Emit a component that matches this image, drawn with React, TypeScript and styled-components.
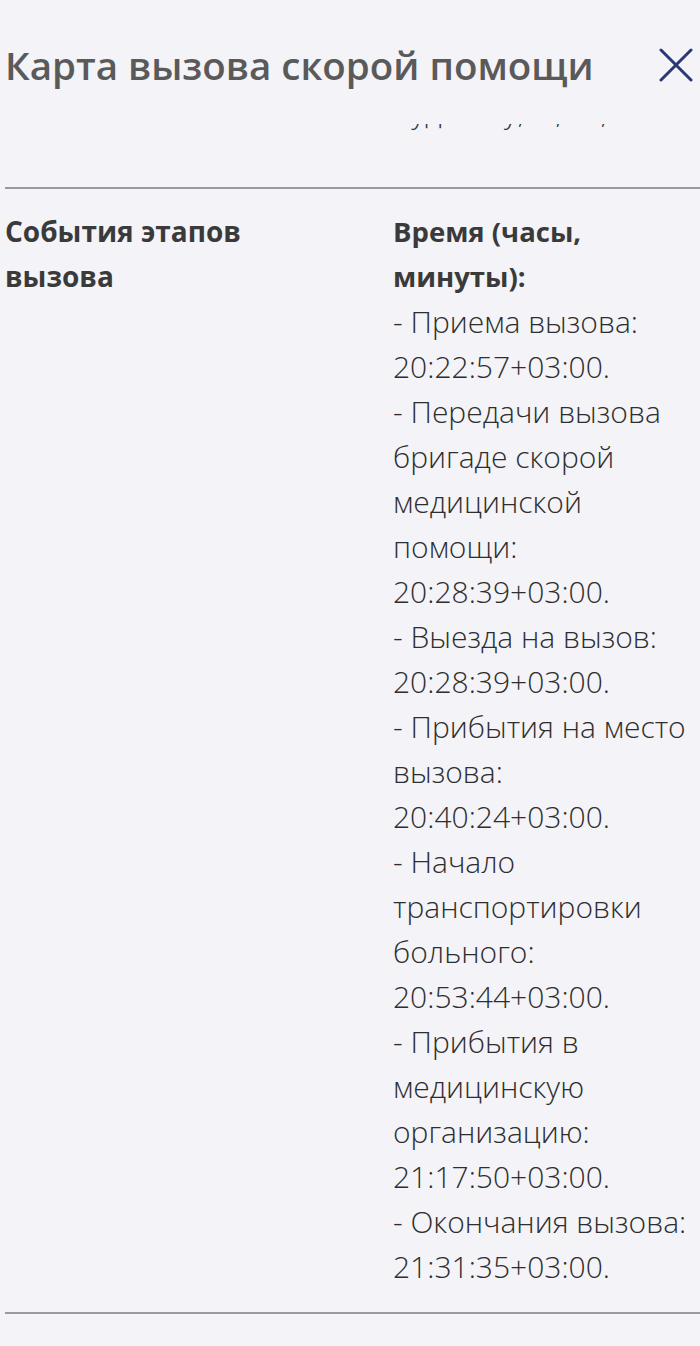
import React from "react";
import styled, { createGlobalStyle } from "styled-components";

const GlobalStyle = createGlobalStyle`
  html, body { margin: 0; padding: 0; background: #f3f3f8; }
  body { font-family: "Open Sans", "Noto Sans", sans-serif; color: #333; }
`;

const Page = styled.div`
  width: 700px;
  min-height: 1346px;
  background: #f3f3f8;
  overflow: hidden;
`;

const Header = styled.header`
  height: 120px;
  display: flex;
  align-items: center;
  justify-content: space-between;
  padding: 9px 7px 0 5px;
  box-sizing: border-box;
`;

const Title = styled.h1`
  margin: 0;
  font-size: 38.5px;
  font-weight: 600;
  color: #5a5a5a;
  white-space: nowrap;
`;

const CloseButton = styled.button`
  border: 0;
  background: none;
  padding: 0;
  width: 34px;
  height: 34px;
  display: flex;
  align-items: center;
  justify-content: center;
  cursor: pointer;
`;

const Tail = styled.div`
  height: 9px;
  margin-top: 4px;
  overflow: hidden;
  padding-left: 396px;
`;

const TailText = styled.div`
  margin-top: -35px;
  font-size: 30px;
  line-height: 45px;
  font-weight: 300;
  white-space: pre;
  color: #333;
`;

const List = styled.div`
  margin-top: 54px;
  padding-left: 5px;
`;

const Row = styled.section`
  display: grid;
  grid-template-columns: 388px 1fr;
  border-top: 2px solid #9a9a9a;
  border-bottom: 2px solid #9a9a9a;
  padding: 20px 0 23px;
`;

const Label = styled.div`
  font-size: 28px;
  line-height: 45px;
  font-weight: 700;
  color: #3a3a3a;
`;

const Value = styled.div`
  font-size: 30px;
  line-height: 45px;
  font-weight: 300;
  color: #2e2e2e;
`;

const ValueHead = styled.div`
  font-weight: 700;
  font-size: 27.5px;
  color: #3a3a3a;
`;

const Line = styled.div`
  white-space: nowrap;
`;

const events: { name: string[]; time: string }[] = [
  { name: ["- Приема вызова:"], time: "20:22:57+03:00." },
  {
    name: ["- Передачи вызова", "бригаде скорой", "медицинской", "помощи:"],
    time: "20:28:39+03:00.",
  },
  { name: ["- Выезда на вызов:"], time: "20:28:39+03:00." },
  { name: ["- Прибытия на место", "вызова:"], time: "20:40:24+03:00." },
  { name: ["- Начало", "транспортировки", "больного:"], time: "20:53:44+03:00." },
  {
    name: ["- Прибытия в", "медицинскую", "организацию:"],
    time: "21:17:50+03:00.",
  },
  { name: ["- Окончания вызова:"], time: "21:31:35+03:00." },
];

export default function App() {
  return (
    <Page>
      <GlobalStyle />
      <Header>
        <Title>Карта вызова скорой помощи</Title>
        <CloseButton aria-label="Закрыть">
          <svg width="34" height="34" viewBox="0 0 34 34" fill="none">
            <path
              d="M2 2 L32 32 M32 2 L2 32"
              stroke="#2b3775"
              strokeWidth="3"
              strokeLinecap="round"
            />
          </svg>
        </CloseButton>
      </Header>
      <Tail aria-hidden="true">
        <TailText>{"  уд        у,    ,     ,"}</TailText>
      </Tail>
      <List>
        <Row>
          <Label>
            События этапов
            <br />
            вызова
          </Label>
          <Value>
            <ValueHead>
              Время (часы,
              <br />
              минуты):
            </ValueHead>
            {events.map((e) => (
              <React.Fragment key={e.time + e.name[0]}>
                {e.name.map((n) => (
                  <Line key={n}>{n}</Line>
                ))}
                <Line>{e.time}</Line>
              </React.Fragment>
            ))}
          </Value>
        </Row>
      </List>
    </Page>
  );
}
